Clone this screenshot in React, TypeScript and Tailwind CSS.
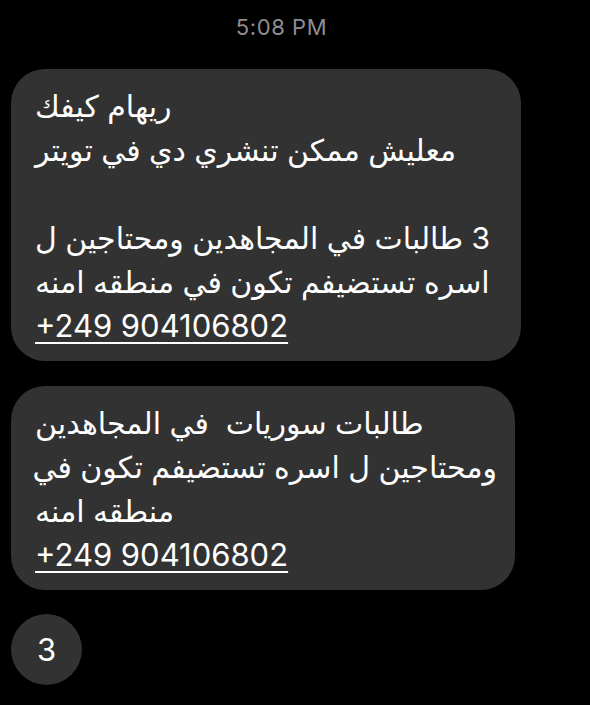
import React from "react";

const font = { fontFamily: '"Inter", "DejaVu Sans", sans-serif' };

function Line({ text }: { text: string }) {
  return (
    <div dir="rtl" className="text-left whitespace-pre text-[30px]">
      {text || "\u00a0"}
    </div>
  );
}

function Phone({ number }: { number: string }) {
  return (
    <div dir="ltr" className="text-left">
      <span className="underline decoration-[1.5px] underline-offset-[5px]">{number}</span>
    </div>
  );
}

export default function App() {
  const first = [
    "ريهام كيفك",
    "معليش ممكن تنشري دي في تويتر",
    "",
    "3 طالبات في المجاهدين ومحتاجين ل",
    "اسره تستضيفم تكون في منطقه امنه",
  ];
  const second = [
    "طالبات سوريات  في المجاهدين",
    "ومحتاجين ل اسره تستضيفم تكون في",
    "منطقه امنه",
  ];

  return (
    <div className="min-h-[705px] w-[590px] bg-black overflow-hidden" style={font}>
      <div className="pt-[14px] pr-[27px] text-center text-[22px] leading-[26px] tracking-[0.6px] text-[#8e8e93]">
        5:08 PM
      </div>

      <div className="flex flex-col items-start gap-[25px] pl-[11px] pt-[29px] text-[31px] leading-[44px] text-white">
        <div className="w-[510px] rounded-[34px] bg-[#323232] pl-[24px] pr-[18px] pt-[15px] pb-[13px]">
          {first.map((t, i) => (
            <Line key={i} text={t} />
          ))}
          <Phone number="+249 904106802" />
        </div>

        <div className="w-[504px] rounded-[34px] bg-[#323232] pl-[24px] pr-[18px] pt-[15px] pb-[13px]">
          {second.map((t, i) => (
            <Line key={i} text={t} />
          ))}
          <Phone number="+249 904106802" />
        </div>

        <div className="w-[71px] h-[71px] -mt-[1px] rounded-full bg-[#323232] flex items-center justify-center">
          3
        </div>
      </div>
    </div>
  );
}
